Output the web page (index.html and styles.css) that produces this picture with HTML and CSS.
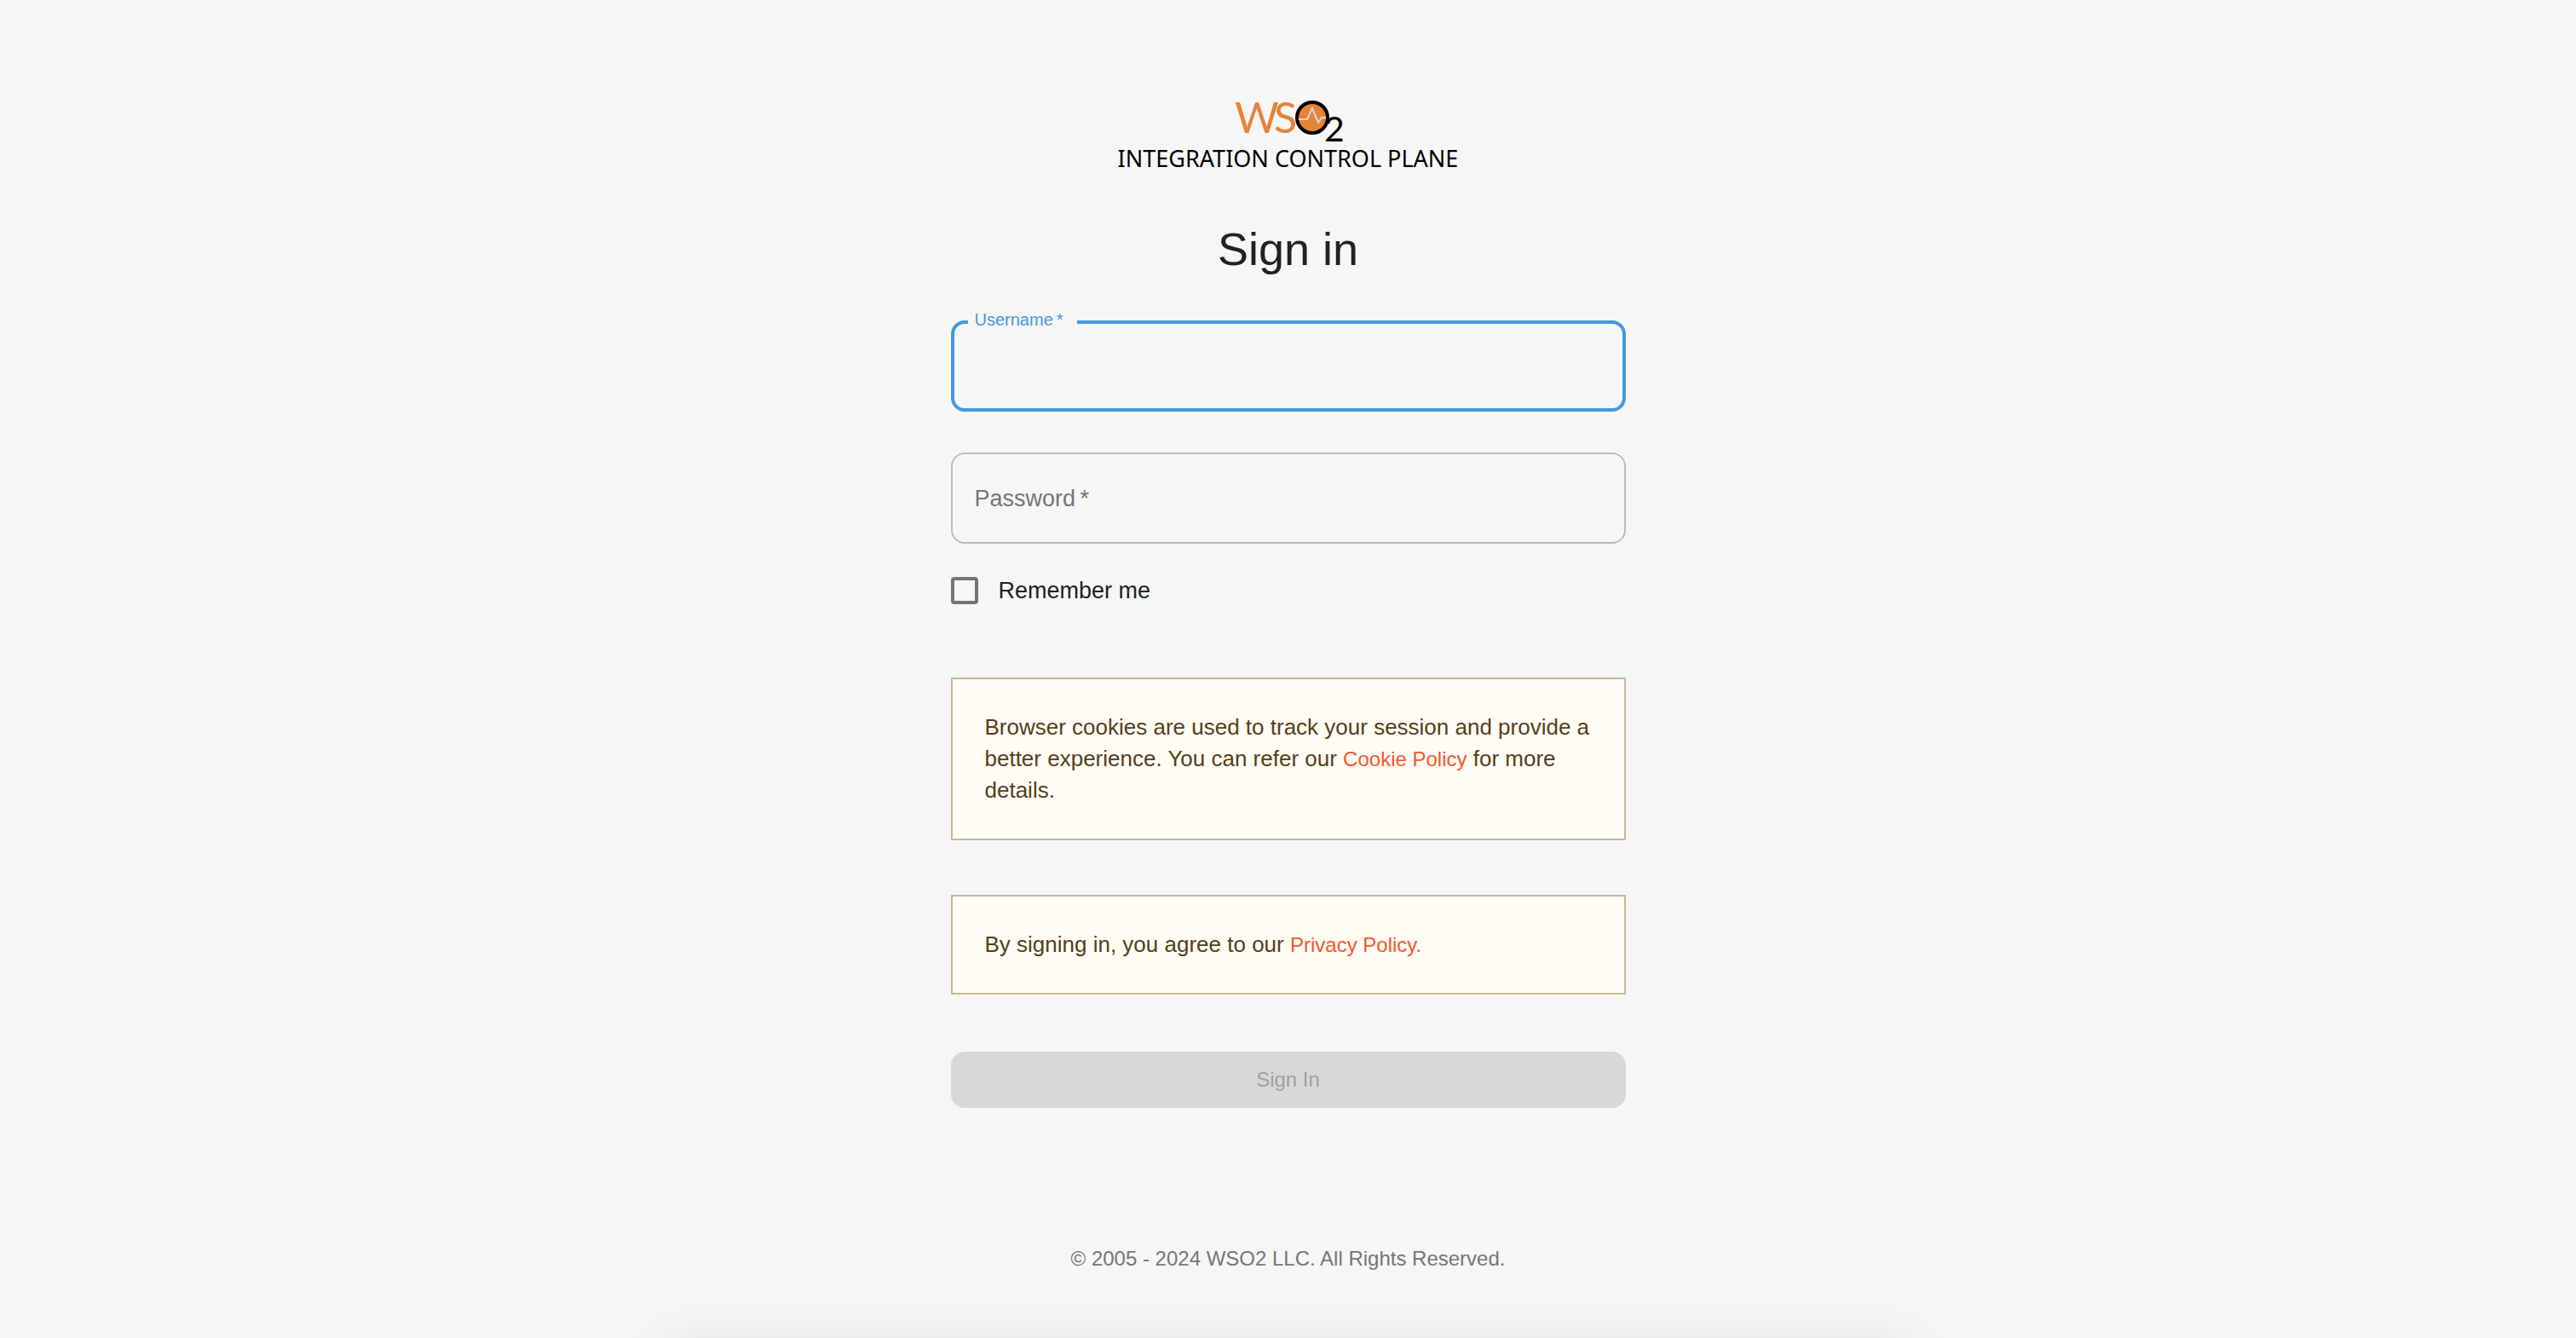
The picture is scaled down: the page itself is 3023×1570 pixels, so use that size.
FILE: index.html
```html
<!DOCTYPE html>
<html lang="en">
<head>
<meta charset="utf-8">
<title>Sign in - WSO2 Integration Control Plane</title>
<link rel="stylesheet" href="styles.css">
</head>
<body>
<main class="page">
  <header class="brand">
    <svg class="brand-mark" viewBox="0 0 124 60" role="img" aria-label="WSO2">
      <text class="mark-letter" x="0" y="42">W</text>
      <text class="mark-letter" x="46" y="42">S</text>
      <circle cx="91" cy="24" r="18" fill="#e58339" stroke="#000" stroke-width="4"/>
      <polyline points="75,26 85,26 91,13 98,30 102,24 107,24" fill="none" stroke="#d9d9d9" stroke-width="2"/>
      <text class="mark-digit" x="105" y="52">2</text>
    </svg>
    <span class="brand-name">INTEGRATION CONTROL PLANE</span>
  </header>
  <h1 class="title">Sign in</h1>
  <form class="form">
    <div class="field field-active">
      <input class="field-input" id="username" type="text" required>
      <label class="field-label" for="username">Username&thinsp;*</label>
    </div>
    <div class="field">
      <input class="field-input" id="password" type="password" required>
      <label class="field-label" for="password">Password&thinsp;*</label>
    </div>
    <div class="remember">
      <input class="remember-box" id="remember" type="checkbox">
      <label for="remember">Remember me</label>
    </div>
    <p class="notice">Browser cookies are used to track your session and provide a better experience. You can refer our <a class="notice-link" href="#cookie-policy">Cookie Policy</a> for more details.</p>
    <p class="notice">By signing in, you agree to our <a class="notice-link" href="#privacy-policy">Privacy Policy.</a></p>
    <button class="submit" type="submit" disabled>Sign In</button>
  </form>
  <footer class="footer">© 2005 - 2024 WSO2 LLC. All Rights Reserved.</footer>
</main>
<div class="edge-shadow"><div class="edge-shadow-panel"></div></div>
</body>
</html>
```
FILE: styles.css
```css
* {
  box-sizing: border-box;
}

body {
  margin: 0;
  background: #f6f6f6;
  color: #212121;
  font-family: "Liberation Sans", Arial, sans-serif;
  font-size: 27px;
  line-height: 40px;
}

.page {
  display: flex;
  flex-direction: column;
  align-items: center;
  min-height: 100vh;
  padding: 114px 24px 0;
}

.brand {
  display: flex;
  flex-direction: column;
  align-items: center;
}

.brand-mark {
  width: 124px;
  height: 60px;
  overflow: visible;
}

.mark-letter {
  fill: #e58339;
  font-family: Lato, sans-serif;
  font-size: 50px;
}

.mark-digit {
  fill: #000;
  font-family: Lato, sans-serif;
  font-size: 41px;
}

.brand-name {
  color: #000;
  font-family: "Noto Sans", sans-serif;
  font-size: 27px;
  line-height: 24px;
}

.title {
  margin: 60px 0 50px;
  font-size: 54px;
  font-weight: 400;
  line-height: 68px;
}

.form {
  display: flex;
  flex-direction: column;
  width: 100%;
  max-width: 792px;
}

.field {
  position: relative;
  margin-bottom: 48px;
}

.field-input {
  display: block;
  width: 100%;
  height: 107px;
  padding: 0 28px;
  border: 2px solid #bcbcbc;
  border-radius: 16px;
  outline: none;
  background: transparent;
  color: inherit;
  font: inherit;
}

.field-label {
  position: absolute;
  top: 34px;
  left: 28px;
  color: #757575;
}

.field-active .field-input {
  border: 4px solid #4599df;
}

.field-active .field-label {
  top: -13px;
  left: 20px;
  padding: 0 16px 0 8px;
  background: #f6f6f6;
  color: #4599df;
  font-size: 20px;
  line-height: 24px;
}

.remember {
  display: flex;
  align-items: center;
  gap: 24px;
  margin: -13px 0 82px;
}

.remember-box {
  appearance: none;
  width: 32px;
  height: 32px;
  margin: 0;
  border: 4px solid #757575;
  border-radius: 4px;
}

.notice {
  margin: 0 0 64px;
  padding: 38px;
  border: 2px solid #c5b99a;
  background: #fffbf5;
  color: #533f18;
  font-size: 26px;
  line-height: 37px;
}

.notice-link {
  color: #f0592b;
  font-size: 24px;
  text-decoration: none;
}

.submit {
  height: 66px;
  margin-top: 3px;
  border: 0;
  border-radius: 16px;
  background: #d8d8d8;
  color: #a0a0a0;
  font: inherit;
  font-size: 24px;
}

.footer {
  margin-top: 157px;
  color: #757575;
  font-size: 24px;
}

/* Soft shadow rising from below the bottom edge of the window */
.edge-shadow {
  position: fixed;
  right: 0;
  bottom: 0;
  left: 0;
  height: 80px;
  overflow: hidden;
  pointer-events: none;
}

.edge-shadow-panel {
  height: 200px;
  margin: 100px 26% 0;
  border-radius: 20px;
  box-shadow: 0 0 70px rgba(0, 0, 0, 0.14);
}
```
